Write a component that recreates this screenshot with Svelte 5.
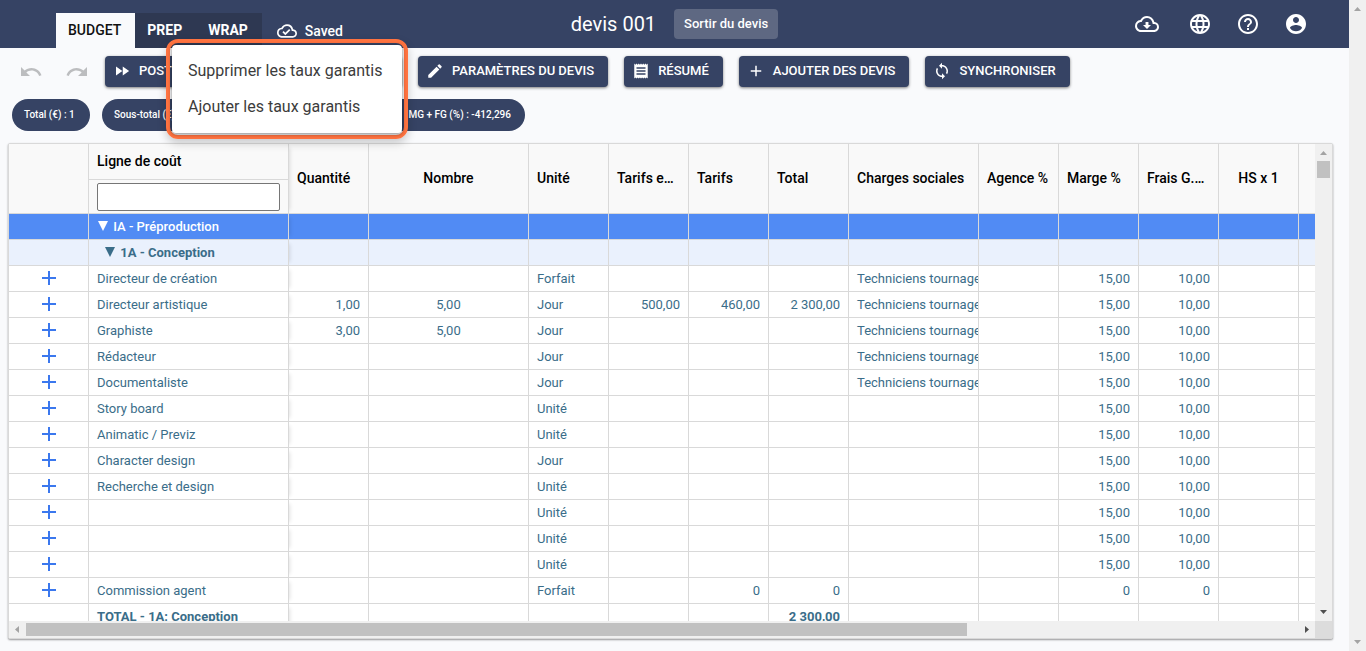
<script>
  const paths = {
    undo: 'M12.5 8c-2.65 0-5.05.99-6.9 2.6L2 7v9h9l-3.62-3.62c1.39-1.16 3.16-1.88 5.12-1.88 3.54 0 6.55 2.31 7.6 5.5l2.37-.78C21.08 11.03 17.15 8 12.5 8z',
    redo: 'M18.4 10.6C16.55 8.99 14.15 8 11.5 8c-4.65 0-8.58 3.03-9.96 7.22L3.9 16c1.05-3.19 4.05-5.5 7.6-5.5 1.95 0 3.73.72 5.12 1.88L13 16h9V7l-3.6 3.6z',
    forward: 'M4 18l8.5-6L4 6v12zm9-12v12l8.5-6L13 6z',
    edit: 'M3 17.25V21h3.75L17.81 9.94l-3.75-3.75L3 17.25zM20.71 7.04a1 1 0 0 0 0-1.41l-2.34-2.34a1 1 0 0 0-1.41 0l-1.83 1.83 3.75 3.75 1.83-1.83z',
    receipt: 'M18 17H6v-2h12v2zm0-4H6v-2h12v2zm0-4H6V7h12v2zM3 22l1.5-1.5L6 22l1.5-1.5L9 22l1.5-1.5L12 22l1.5-1.5L15 22l1.5-1.5L18 22l1.5-1.5L21 22V2l-1.5 1.5L18 2l-1.5 1.5L15 2l-1.5 1.5L12 2l-1.5 1.5L9 2 7.5 3.5 6 2 4.5 3.5 3 2v20z',
    add: 'M19 13h-6v6h-2v-6H5v-2h6V5h2v6h6v2z',
    sync: 'M12 4V1L8 5l4 4V6c3.31 0 6 2.69 6 6 0 1.01-.25 1.97-.7 2.8l1.46 1.46A7.93 7.93 0 0 0 20 12c0-4.42-3.58-8-8-8zm0 14c-3.31 0-6-2.69-6-6 0-1.01.25-1.97.7-2.8L5.24 7.74A7.93 7.93 0 0 0 4 12c0 4.42 3.58 8 8 8v3l4-4-4-4v3z',
    cloudDone: 'M19.35 10.04A7.49 7.49 0 0 0 12 4C9.11 4 6.6 5.64 5.35 8.04A5.994 5.994 0 0 0 0 14c0 3.31 2.69 6 6 6h13c2.76 0 5-2.24 5-5 0-2.64-2.05-4.78-4.65-4.96zM19 18H6c-2.21 0-4-1.79-4-4 0-2.05 1.53-3.76 3.56-3.97l1.07-.11.5-.95A5.469 5.469 0 0 1 12 6c2.62 0 4.88 1.86 5.39 4.43l.3 1.5 1.53.11A2.98 2.98 0 0 1 22 15c0 1.65-1.35 3-3 3zm-9-3.82l-2.09-2.09L6.5 13.5 10 17l6.01-6.01-1.41-1.41z',
    cloudDownload: 'M19.35 10.04A7.49 7.49 0 0 0 12 4C9.11 4 6.6 5.64 5.35 8.04A5.994 5.994 0 0 0 0 14c0 3.31 2.69 6 6 6h13c2.76 0 5-2.24 5-5 0-2.64-2.05-4.78-4.65-4.96zM19 18H6c-2.21 0-4-1.79-4-4 0-2.05 1.53-3.76 3.56-3.97l1.07-.11.5-.95A5.469 5.469 0 0 1 12 6c2.62 0 4.88 1.86 5.39 4.43l.3 1.5 1.53.11A2.98 2.98 0 0 1 22 15c0 1.65-1.35 3-3 3zm-5.55-8h-2.9v3H8l4 4 4-4h-2.55z',
    language: 'M11.99 2C6.47 2 2 6.48 2 12s4.47 10 9.99 10C17.52 22 22 17.52 22 12S17.52 2 11.99 2zm6.93 6h-2.95a15.65 15.65 0 0 0-1.38-3.56A8.03 8.03 0 0 1 18.92 8zM12 4.04c.83 1.2 1.48 2.53 1.91 3.96h-3.82c.43-1.43 1.08-2.76 1.91-3.96zM4.26 14C4.1 13.36 4 12.69 4 12s.1-1.36.26-2h3.38c-.08.66-.14 1.32-.14 2s.06 1.34.14 2H4.26zm.82 2h2.95c.32 1.25.78 2.45 1.38 3.56A7.987 7.987 0 0 1 5.08 16zm2.95-8H5.08a7.987 7.987 0 0 1 4.33-3.56A15.65 15.65 0 0 0 8.03 8zM12 19.96c-.83-1.2-1.48-2.53-1.91-3.96h3.82c-.43 1.43-1.08 2.76-1.91 3.96zM14.34 14H9.66c-.09-.66-.16-1.32-.16-2s.07-1.35.16-2h4.68c.09.65.16 1.32.16 2s-.07 1.34-.16 2zm.25 5.56c.6-1.11 1.06-2.31 1.38-3.56h2.95a8.03 8.03 0 0 1-4.33 3.56zM16.36 14c.08-.66.14-1.32.14-2s-.06-1.34-.14-2h3.38c.16.64.26 1.31.26 2s-.1 1.36-.26 2h-3.38z',
    help: 'M11 18h2v-2h-2v2zm1-16C6.48 2 2 6.48 2 12s4.48 10 10 10 10-4.48 10-10S17.52 2 12 2zm0 18c-4.41 0-8-3.59-8-8s3.59-8 8-8 8 3.59 8 8-3.59 8-8 8zm0-14c-2.21 0-4 1.79-4 4h2c0-1.1.9-2 2-2s2 .9 2 2c0 2-3 1.75-3 5h2c0-2.25 3-2.5 3-5 0-2.21-1.79-4-4-4z',
    account: 'M12 2C6.48 2 2 6.48 2 12s4.48 10 10 10 10-4.48 10-10S17.52 2 12 2zm0 3c1.66 0 3 1.34 3 3s-1.34 3-3 3-3-1.34-3-3 1.34-3 3-3zm0 14.2a7.2 7.2 0 0 1-6-3.22c.03-1.99 4-3.08 6-3.08 1.99 0 5.97 1.09 6 3.08a7.2 7.2 0 0 1-6 3.22z'
  }

  const actions = [
    { icon: 'edit', label: 'Paramètres du devis' },
    { icon: 'receipt', label: 'Résumé' },
    { icon: 'add', label: 'Ajouter des devis' },
    { icon: 'sync', label: 'Synchroniser' }
  ]

  const columns = [
    { key: 'qty', title: 'Quantité', width: 80, align: 'right' },
    { key: 'count', title: 'Nombre', width: 160, align: 'center', center: true },
    { key: 'unit', title: 'Unité', width: 80 },
    { key: 'extRate', title: 'Tarifs e…', width: 80, align: 'right' },
    { key: 'rate', title: 'Tarifs', width: 80, align: 'right' },
    { key: 'total', title: 'Total', width: 80, align: 'right' },
    { key: 'social', title: 'Charges sociales', width: 130 },
    { key: 'agency', title: 'Agence %', width: 80, align: 'right' },
    { key: 'margin', title: 'Marge %', width: 80, align: 'right' },
    { key: 'fees', title: 'Frais G.…', width: 80, align: 'right' },
    { key: 'hs1', title: 'HS x 1', width: 80, align: 'right', center: true },
    { key: 'hs2', title: '', width: 80 }
  ]

  const crew = 'Techniciens tournage'
  const pct = { margin: '15,00', fees: '10,00' }
  const rows = [
    { name: 'IA - Préproduction', level: 'group' },
    { name: '1A - Conception', level: 'subgroup' },
    { name: 'Directeur de création', unit: 'Forfait', social: crew, ...pct },
    { name: 'Directeur artistique', qty: '1,00', count: '5,00', unit: 'Jour', extRate: '500,00', rate: '460,00', total: '2 300,00', social: crew, ...pct },
    { name: 'Graphiste', qty: '3,00', count: '5,00', unit: 'Jour', social: crew, ...pct },
    { name: 'Rédacteur', unit: 'Jour', social: crew, ...pct },
    { name: 'Documentaliste', unit: 'Jour', social: crew, ...pct },
    { name: 'Story board', unit: 'Unité', ...pct },
    { name: 'Animatic / Previz', unit: 'Unité', ...pct },
    { name: 'Character design', unit: 'Jour', ...pct },
    { name: 'Recherche et design', unit: 'Unité', ...pct },
    { name: '', unit: 'Unité', ...pct },
    { name: '', unit: 'Unité', ...pct },
    { name: '', unit: 'Unité', ...pct },
    { name: 'Commission agent', unit: 'Forfait', rate: '0', total: '0', margin: '0', fees: '0' },
    { name: 'TOTAL - 1A: Conception', total: '2 300,00', level: 'sum' }
  ]

  let filter = ''
</script>

<div class="app">
  <div class="page">
    <header>
      <div class="left">
        <nav>
          <a href="#budget" class="active">BUDGET</a>
          <a href="#prep">PREP</a>
          <a href="#wrap">WRAP</a>
        </nav>
        <div class="saved">
          <svg width="20" height="20" viewBox="0 0 24 24"><path d={paths.cloudDone} /></svg>
          <span>Saved</span>
        </div>
      </div>
      <div class="title">
        <h1>devis 001</h1>
        <button class="exit">Sortir du devis</button>
      </div>
      <div class="icons">
        {#each ['cloudDownload', 'language', 'help', 'account'] as icon}
          <button class={icon} aria-label={icon}>
            <svg width="24" height="24" viewBox="0 0 24 24"><path d={paths[icon]} /></svg>
          </button>
        {/each}
      </div>
    </header>

    <div class="toolbar">
      <button class="history" aria-label="undo">
        <svg width="24" height="24" viewBox="0 0 24 24"><path d={paths.undo} /></svg>
      </button>
      <button class="history" aria-label="redo">
        <svg width="24" height="24" viewBox="0 0 24 24"><path d={paths.redo} /></svg>
      </button>
      <div class="menuAnchor">
        <button class="action">
          <svg width="18" height="18" viewBox="0 0 24 24"><path d={paths.forward} /></svg>
          Post
        </button>
        <div class="menuFrame">
          <div class="menu">
            <button>Supprimer les taux garantis</button>
            <button>Ajouter les taux garantis</button>
          </div>
        </div>
      </div>
      {#each actions as action}
        <button class="action">
          <svg width="18" height="18" viewBox="0 0 24 24"><path d={paths[action.icon]} /></svg>
          {action.label}
        </button>
      {/each}
    </div>

    <div class="chips">
      <span class="chip">Total (€) : 1</span>
      <span class="chip subtotal">Sous-total (€)</span>
      <span class="chip margins">MG + FG (%) : -412,296</span>
    </div>

    <div class="grid">
      <div class="viewport">
        <table>
          <colgroup>
            <col style="width: 80px" />
            <col style="width: 200px" />
            {#each columns as col}
              <col style="width: {col.width}px" />
            {/each}
          </colgroup>
          <thead>
            <tr>
              <th></th>
              <th class="lineHead frozen">
                <label for="filter">Ligne de coût</label>
                <div class="filter"><input id="filter" type="text" bind:value={filter} /></div>
              </th>
              {#each columns as col}
                <th class:center={col.center}>{col.title}</th>
              {/each}
            </tr>
          </thead>
          <tbody>
            {#each rows as row}
              <tr class={row.level}>
                <td class="addCell">
                  {#if !row.level}
                    <button aria-label="add line">
                      <svg width="14" height="14" viewBox="0 0 14 14"><path d="M0 6h6V0h2v6h6v2H8v6H6V8H0z" /></svg>
                    </button>
                  {/if}
                </td>
                <td class="frozen">
                  {#if row.level === 'group' || row.level === 'subgroup'}
                    <svg class="caret" width="10" height="10" viewBox="0 0 10 10"><path d="M0 0h10L5 10z" /></svg>
                  {/if}
                  {row.name}
                </td>
                {#each columns as col}
                  <td class={col.align}>{row[col.key] ?? ''}</td>
                {/each}
              </tr>
            {/each}
          </tbody>
        </table>
      </div>
      <div class="bar vertical">
        <svg width="17" height="17" viewBox="0 0 17 17"><path d="M5 11l3.5-4 3.5 4z" /></svg>
        <div class="thumb"></div>
        <svg class="dark end" width="17" height="17" viewBox="0 0 17 17"><path d="M5 6h7l-3.5 4z" /></svg>
      </div>
      <div class="bar horizontal">
        <svg width="17" height="17" viewBox="0 0 17 17"><path d="M10 5v7L6 8.5z" /></svg>
        <div class="track"><div class="thumb"></div></div>
        <svg class="dark" width="17" height="17" viewBox="0 0 17 17"><path d="M7 5v7l4-3.5z" /></svg>
      </div>
      <div class="corner"></div>
    </div>
  </div>

  <div class="bar vertical">
    <svg width="17" height="17" viewBox="0 0 17 17"><path d="M5 11l3.5-4 3.5 4z" /></svg>
    <svg class="end" width="17" height="17" viewBox="0 0 17 17"><path d="M5 6h7l-3.5 4z" /></svg>
  </div>
</div>

<style>
  :global(body) {
    background: #f9fafc;
    font-family: Roboto, 'Liberation Sans', sans-serif;
  }
  * {
    box-sizing: border-box;
  }
  button {
    font-family: inherit;
    border: none;
    background: none;
    padding: 0;
    cursor: pointer;
  }
  svg {
    display: block;
    flex: none;
    fill: currentColor;
  }
  .app {
    display: flex;
    height: 100vh;
    overflow: hidden;
  }
  .page {
    flex: 1;
    min-width: 0;
    display: flex;
    flex-direction: column;
  }

  header {
    flex: none;
    display: grid;
    grid-template-columns: 1fr auto 1fr;
    height: 48px;
    background: #364364;
    color: #fff;
  }
  .left {
    display: flex;
    align-items: flex-end;
    padding-left: 56px;
  }
  nav {
    display: flex;
    background: #2e3852;
  }
  nav a {
    height: 35px;
    line-height: 35px;
    padding: 0 14px 0 12px;
    color: #fff;
    font-size: 14px;
    font-weight: 700;
    text-decoration: none;
  }
  nav a.active {
    background: #f9fafc;
    color: #111;
    font-weight: 500;
  }
  .saved {
    display: flex;
    align-items: center;
    gap: 8px;
    height: 35px;
    margin-left: 15px;
    font-size: 14px;
    font-weight: 500;
  }
  .title {
    display: flex;
    align-items: center;
    gap: 18px;
  }
  h1 {
    margin: 0;
    font-size: 20px;
    font-weight: 400;
  }
  .exit {
    height: 30px;
    padding: 0 10px 2px;
    border-radius: 4px;
    background: #5e6882;
    color: #fff;
    font-size: 13px;
    font-weight: 500;
  }
  .icons {
    display: flex;
    align-items: center;
    justify-content: flex-end;
    gap: 24px;
    padding-right: 41px;
  }
  .icons button {
    color: #fff;
  }
  .icons .cloudDownload {
    margin-right: 5px;
  }

  .toolbar {
    display: flex;
    align-items: center;
    gap: 16px;
    padding: 8px 19px;
  }
  .history {
    width: 24px;
    margin-right: 6px;
    color: #bcbdbf;
  }
  .menuAnchor {
    position: relative;
    flex: none;
    width: 297px;
    margin-left: -6px;
  }
  .action {
    display: flex;
    align-items: center;
    gap: 8px;
    height: 31px;
    padding: 0 14px 2px 8px;
    border-radius: 4px;
    background: #364364;
    box-shadow: 0 1px 3px rgba(0, 0, 0, 0.5);
    color: #fff;
    font-size: 13px;
    font-weight: 500;
    text-transform: uppercase;
    white-space: nowrap;
  }
  .menuAnchor .action {
    width: 100%;
  }
  .menuFrame {
    position: absolute;
    z-index: 2;
    top: -17px;
    left: 61px;
    width: 242px;
    padding: 2px;
    border: 4px solid #ff7340;
    border-radius: 12px;
    box-shadow: 0 4px 10px rgba(0, 0, 0, 0.2);
  }
  .menu {
    display: flex;
    flex-direction: column;
    padding: 7px 0 9px;
    border-radius: 4px;
    background: #fff;
    box-shadow: 0 1px 4px rgba(0, 0, 0, 0.5);
  }
  .menu button {
    height: 36px;
    padding: 0 16px;
    color: #3c3c3c;
    font-size: 16px;
    text-align: left;
    white-space: nowrap;
  }

  .chips {
    display: flex;
    gap: 12px;
    padding: 4px 12px 12px;
  }
  .chip {
    min-width: 78px;
    height: 32px;
    line-height: 32px;
    padding: 0 12px;
    border-radius: 16px;
    background: #364364;
    color: #fff;
    font-size: 10px;
    font-weight: 500;
    white-space: nowrap;
  }
  .subtotal {
    width: 140px;
  }
  .margins {
    width: 271px;
    padding-right: 14px;
    text-align: right;
  }

  .grid {
    flex: 1;
    min-height: 0;
    display: grid;
    grid-template-columns: minmax(0, 1fr) 17px;
    grid-template-rows: minmax(0, 1fr) 17px;
    margin: 0 16px 12px 8px;
    border: 1px solid #d9d9d9;
    box-shadow: 0 1px 2px rgba(0, 0, 0, 0.4);
    border-radius: 2px;
    background: #fff;
  }
  .viewport {
    overflow: hidden;
  }
  table {
    width: 1370px;
    table-layout: fixed;
    border-collapse: separate;
    border-spacing: 0;
    font-size: 13px;
    color: #3a6d89;
  }
  th,
  td {
    padding: 0 8px;
    border-right: 1px solid #d9d9d9;
    border-bottom: 1px solid #d9d9d9;
    overflow: hidden;
    white-space: nowrap;
    text-align: left;
  }
  th {
    height: 70px;
    padding-bottom: 2px;
    background: #f9f9f9;
    color: #000;
    font-size: 14px;
    font-weight: 500;
    text-overflow: ellipsis;
  }
  td {
    height: 26px;
    line-height: 25px;
    background: #fff;
  }
  .lineHead {
    padding: 0;
  }
  .lineHead label {
    display: block;
    height: 36px;
    line-height: 35px;
    padding: 0 8px;
    border-bottom: 1px solid #d9d9d9;
  }
  .filter {
    height: 33px;
    padding: 3px 8px;
  }
  .filter input {
    display: block;
    width: 100%;
    height: 28px;
    border: 1px solid #767676;
    border-radius: 2px;
    background: #fff;
  }
  .frozen {
    position: relative;
    box-shadow: 5px 0 4px -4px rgba(0, 0, 0, 0.12);
  }
  .center {
    text-align: center;
  }
  .right {
    text-align: right;
  }
  .addCell button {
    display: block;
    width: 14px;
    margin: 0 auto 1px;
    color: #3b78ee;
  }
  .group td {
    background: #518bf4;
    color: #fff;
    font-weight: 500;
  }
  .subgroup td {
    background: #eaf1fd;
    font-weight: 700;
  }
  .sum td {
    font-weight: 700;
  }
  .caret {
    display: inline-block;
    margin: 0 2px 0 1px;
  }
  .subgroup .caret {
    margin-left: 8px;
  }

  .bar {
    display: flex;
    background: #f0f0f0;
    color: #a3a3a3;
  }
  .vertical {
    flex: none;
    flex-direction: column;
    width: 17px;
  }
  .dark {
    color: #505050;
  }
  .end {
    margin-top: auto;
  }
  .thumb {
    background: #c1c1c1;
  }
  .vertical .thumb {
    height: 17px;
    margin: 0 2px;
  }
  .track {
    flex: 1;
    display: flex;
    padding: 2px 0;
  }
  .track .thumb {
    width: 74%;
  }
  .corner {
    background: #dcdcdc;
  }
</style>
